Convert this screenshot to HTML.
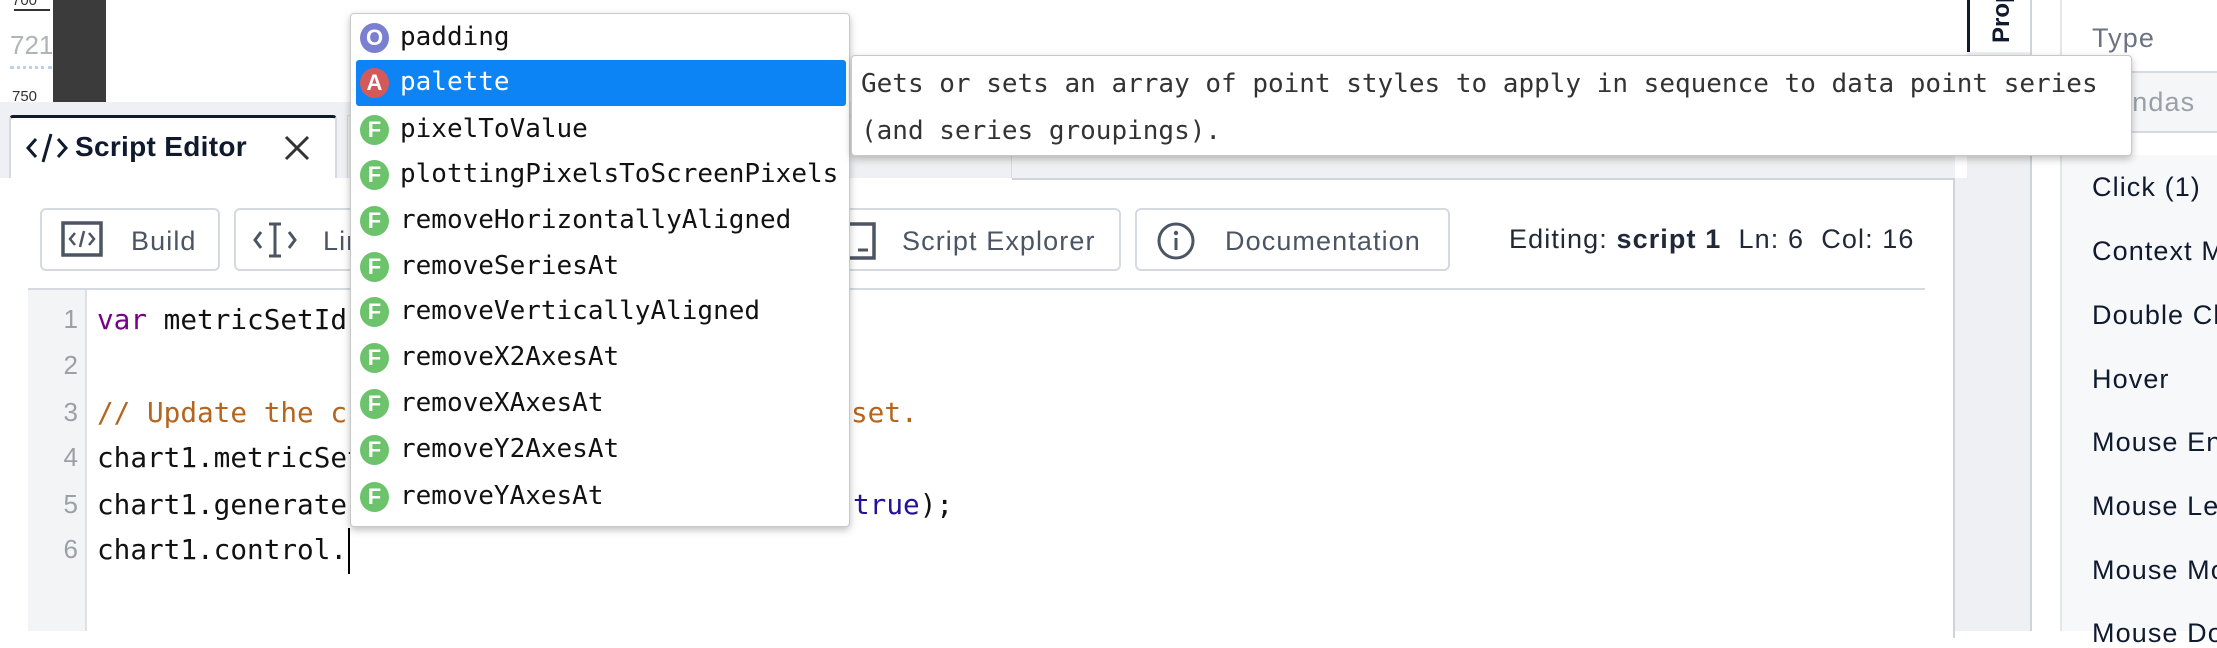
<!DOCTYPE html>
<html><head><meta charset="utf-8"><style>
*{margin:0;padding:0;box-sizing:border-box}
body{width:2217px;height:631px;overflow:hidden;background:#fff;position:relative;font-family:"Liberation Sans",sans-serif}
.a{position:absolute}
.mono{font-family:"DejaVu Sans Mono","Liberation Mono",monospace}
.btn{position:absolute;top:208px;height:63px;border:2px solid #d5dae1;border-radius:6px;background:#fff}
.bt{position:absolute;font-size:27px;color:#4b5563;top:226px;line-height:30px;letter-spacing:1.1px;white-space:nowrap}
.ln{position:absolute;left:28px;width:50px;text-align:right;font-size:26px;color:#9aa0a6}
.code{position:absolute;left:97px;font-size:27.7px;color:#111;white-space:pre;line-height:32px}
.it{position:absolute;left:351px;width:498px;height:46px}
.bd{position:absolute;left:9px;top:8px;width:29px;height:30px;border-radius:50%;color:#fff;font-family:"Liberation Sans",sans-serif;font-weight:bold;font-size:22px;text-align:center;line-height:30px}
.itx{position:absolute;left:49px;top:6px;font-size:26px;color:#111;white-space:pre;line-height:32px}
.F{background:#6cc36c}
.rp{position:absolute;left:2092px;font-size:27px;color:#0f1a2e;white-space:nowrap;line-height:30px;letter-spacing:1.1px}
</style></head><body>
<div class="a" style="left:53px;top:0;width:53px;height:102px;background:#3b3b3b"></div>
<div class="a" style="left:12px;top:-8px;font-size:15px;color:#333">700</div>
<div class="a" style="left:14px;top:9px;width:36px;height:2px;background:#333"></div>
<div class="a" style="left:10px;top:30px;font-size:26px;color:#b0b4b9">721</div>
<div class="a" style="left:10px;top:66px;width:42px;border-top:3px dotted #b9d3ea"></div>
<div class="a" style="left:12px;top:88px;font-size:15px;color:#333">750</div>
<div class="a" style="left:0;top:102px;width:1955px;height:76px;background:#eef0f3"></div>
<div class="a" style="left:1955px;top:0;width:106px;height:631px;background:#eef0f3"></div>
<div class="a" style="left:1955px;top:0;width:12px;height:178px;background:#fff"></div>
<div class="a" style="left:1967px;top:0;width:64px;height:52px;background:#fff"></div>
<div class="a" style="left:1967px;top:0;width:3px;height:52px;background:#0f1a2e"></div>
<div class="a" style="left:1988px;top:43px;transform-origin:0 0;transform:rotate(-90deg);font-size:24px;font-weight:bold;color:#0f1a2e;white-space:nowrap">Properties</div>
<div class="a" style="left:2030px;top:0;width:2px;height:631px;background:#cfd4db"></div>
<div class="a" style="left:2032px;top:0;width:29px;height:631px;background:#fff"></div>
<div class="a" style="left:2060px;top:0;width:2px;height:631px;background:#e3e6ea"></div>
<div class="a" style="left:347px;top:115px;width:665px;height:63px;background:#eef0f3;border:1px solid #d5dae1;border-bottom:none"></div>
<div class="a" style="left:9px;top:115px;width:328px;height:65px;background:#fff;border:2px solid #d5dae1;border-top:3px solid #0f1a2e;border-bottom:none;border-radius:4px 4px 0 0"></div>
<svg class="a" style="left:26px;top:132px" width="42" height="32" viewBox="0 0 42 32"><path d="M10 7 L2 16 L10 25 M32 7 L40 16 L32 25 M25 2 L17 30" stroke="#0f1a2e" stroke-width="3" fill="none"/></svg>
<div class="a" style="left:75px;top:131px;font-size:28px;font-weight:bold;color:#0f1a2e;letter-spacing:0.3px">Script Editor</div>
<svg class="a" style="left:283px;top:134px" width="28" height="28"><path d="M3 3 L25 25 M25 3 L3 25" stroke="#333" stroke-width="3"/></svg>
<div class="a" style="left:0;top:178px;width:1955px;height:460px;background:#fff;border-right:2px solid #cfd4db"></div>
<div class="a" style="left:1012px;top:178px;width:943px;height:2px;background:#cfd4db"></div>
<div class="btn" style="left:40px;width:180px"></div>
<svg class="a" style="left:61px;top:221px" width="42" height="36"><rect x="2" y="2" width="38" height="32" fill="none" stroke="#4b5563" stroke-width="3.5"/><path d="M14 12 L9 18 L14 24 M28 12 L33 18 L28 24 M23 10 L19 26" stroke="#4b5563" stroke-width="2.5" fill="none"/></svg>
<div class="bt" style="left:131px">Build</div>
<div class="btn" style="left:234px;width:200px"></div>
<svg class="a" style="left:252px;top:220px" width="46" height="40"><path d="M9 12 L3 20 L9 28 M37 12 L43 20 L37 28 M23 4 L23 36 M17 4 L29 4 M17 36 L29 36" stroke="#4b5563" stroke-width="3" fill="none"/></svg>
<div class="bt" style="left:323px">Lint</div>
<div class="btn" style="left:800px;width:321px"></div>
<svg class="a" style="left:838px;top:222px" width="40" height="38"><rect x="2" y="2" width="34" height="34" fill="none" stroke="#4b5563" stroke-width="3.5"/><path d="M20 28 L30 28" stroke="#4b5563" stroke-width="3"/></svg>
<div class="bt" style="left:902px">Script Explorer</div>
<div class="btn" style="left:1135px;width:315px"></div>
<svg class="a" style="left:1156px;top:221px" width="40" height="40"><circle cx="20" cy="20" r="17" fill="none" stroke="#4b5563" stroke-width="3"/><circle cx="20" cy="12" r="2.2" fill="#4b5563"/><path d="M20 17 L20 29" stroke="#4b5563" stroke-width="3"/></svg>
<div class="bt" style="left:1225px">Documentation</div>
<div class="a" style="left:1509px;top:224px;font-size:27px;color:#1f2937;white-space:pre;letter-spacing:1.1px">Editing: <b>script 1</b>  Ln: 6  Col: 16</div>
<div class="a" style="left:28px;top:288px;width:1897px;height:2px;background:#d5dae1"></div>
<div class="a" style="left:28px;top:290px;width:59px;height:341px;background:#f3f4f6;border-right:2px solid #dde1e6"></div>
<div class="ln" style="top:304px">1</div><div class="ln" style="top:350px">2</div><div class="ln" style="top:397px">3</div>
<div class="ln" style="top:442px">4</div><div class="ln" style="top:489px">5</div><div class="ln" style="top:534px">6</div>
<div class="code mono" style="top:304px"><span style="color:#770088">var</span> metricSetId = chart1.metricSetId;</div>
<div class="code mono" style="top:397px;color:#b5651d">// Update the c</div>
<div class="code mono" style="top:397px;left:851px;color:#b5651d">set.</div>
<div class="code mono" style="top:442px">chart1.metricSetId = metricSetId;</div>
<div class="code mono" style="top:489px">chart1.generate</div>
<div class="code mono" style="top:489px;left:853px"><span style="color:#221199">true</span>);</div>
<div class="code mono" style="top:534px">chart1.control.</div>
<div class="a" style="left:348px;top:528px;width:2px;height:46px;background:#000"></div>
<div class="rp" style="top:23px;color:#6b7280">Type</div>
<div class="a" style="left:2062px;top:71px;width:155px;height:62px;background:#f5f6f8;border-top:2px solid #d5dae1;border-bottom:2px solid #d5dae1"></div>
<div class="rp" style="top:87px;left:2100px;color:#9aa0a8">dundas</div>
<div class="a" style="left:2062px;top:155px;width:155px;height:476px;background:#f7f8fa"></div>
<div class="rp" style="top:172px">Click (1)</div>
<div class="rp" style="top:236px">Context Menu</div>
<div class="rp" style="top:300px">Double Click</div>
<div class="rp" style="top:364px">Hover</div>
<div class="rp" style="top:427px">Mouse Enter</div>
<div class="rp" style="top:491px">Mouse Leave</div>
<div class="rp" style="top:555px">Mouse Move</div>
<div class="rp" style="top:618px">Mouse Down</div>
<div class="a" style="left:350px;top:13px;width:500px;height:514px;background:#fff;border:1px solid #c8c8c8;border-radius:4px;box-shadow:0 3px 8px rgba(0,0,0,.25)"></div>
<div class="a" style="left:356px;top:60px;width:490px;height:46px;background:#0d84f5;border-radius:3px"></div>
<div class="it mono" style="top:15px"><div class="bd" style="background:#7b7fcf">O</div><div class="itx">padding</div></div>
<div class="it mono" style="top:60px"><div class="bd" style="background:#d45a5a">A</div><div class="itx" style="color:#fff">palette</div></div>
<div class="it mono" style="top:107px"><div class="bd F">F</div><div class="itx">pixelToValue</div></div>
<div class="it mono" style="top:152px"><div class="bd F">F</div><div class="itx">plottingPixelsToScreenPixels</div></div>
<div class="it mono" style="top:198px"><div class="bd F">F</div><div class="itx">removeHorizontallyAligned</div></div>
<div class="it mono" style="top:244px"><div class="bd F">F</div><div class="itx">removeSeriesAt</div></div>
<div class="it mono" style="top:289px"><div class="bd F">F</div><div class="itx">removeVerticallyAligned</div></div>
<div class="it mono" style="top:335px"><div class="bd F">F</div><div class="itx">removeX2AxesAt</div></div>
<div class="it mono" style="top:381px"><div class="bd F">F</div><div class="itx">removeXAxesAt</div></div>
<div class="it mono" style="top:427px"><div class="bd F">F</div><div class="itx">removeY2AxesAt</div></div>
<div class="it mono" style="top:474px"><div class="bd F">F</div><div class="itx">removeYAxesAt</div></div>
<div class="a mono" style="left:851px;top:55px;width:1281px;height:101px;background:#fff;border:1px solid #c8c8c8;border-radius:4px;box-shadow:0 3px 8px rgba(0,0,0,.25);padding:5px 9px;font-size:26px;line-height:47px;color:#333;white-space:pre">Gets or sets an array of point styles to apply in sequence to data point series
(and series groupings).</div>
</body></html>
